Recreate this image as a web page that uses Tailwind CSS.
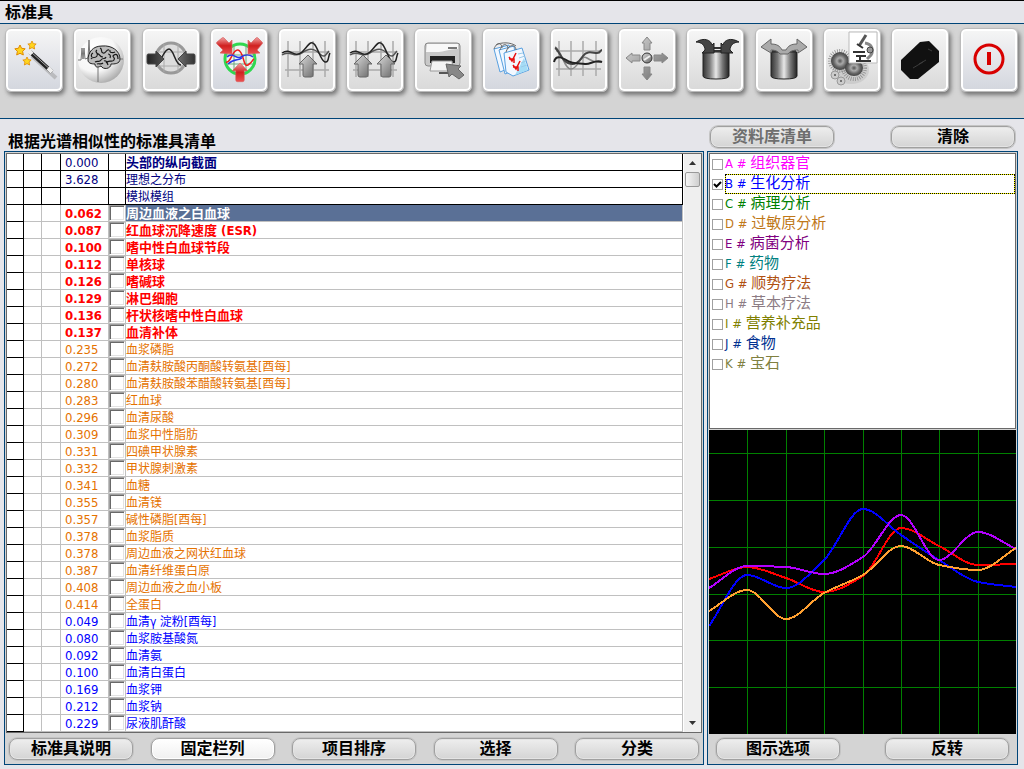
<!DOCTYPE html>
<html lang="zh-CN">
<head>
  <meta charset="UTF-8" />
  <meta name="viewport" content="width=device-width, initial-scale=1.0" />
  <title>标准具</title>
  <script src="https://cdn.jsdelivr.net/npm/@tailwindcss/browser@4"></script>
</head>
<body class="min-h-screen flex flex-col bg-[#e5e5ea] text-black font-['DejaVu_Sans_Condensed','Noto_Sans_CJK_SC',sans-serif]">

  <header class="border-t border-black">
    <h1 class="h-[22px] pl-[5px] text-[16px] leading-6 font-bold">标准具</h1>
  </header>

  <!-- Toolbar -->
  <nav class="flex justify-between items-start h-24 pt-1 pl-[5px] pr-[6px] bg-[#d4d4d4] border-y border-[#004578]">
    <svg class="absolute w-0 h-0">
      <defs>
        <linearGradient id="metal" x1="0" x2="1"><stop offset="0" stop-color="#333"/><stop offset=".25" stop-color="#777"/><stop offset=".5" stop-color="#e8e8e8"/><stop offset=".75" stop-color="#777"/><stop offset="1" stop-color="#222"/></linearGradient>
        <linearGradient id="grey" x1="0" x2="1" y2="1"><stop offset="0" stop-color="#ddd"/><stop offset="1" stop-color="#666"/></linearGradient>
        <linearGradient id="dark" x1="0" x2="1"><stop offset="0" stop-color="#222"/><stop offset=".6" stop-color="#777"/><stop offset="1" stop-color="#333"/></linearGradient>
        <linearGradient id="red" x1="0" x2="0" y2="1"><stop offset="0" stop-color="#f0a0a0"/><stop offset=".5" stop-color="#d02020"/><stop offset="1" stop-color="#ec5050"/></linearGradient>
        <radialGradient id="ball" cx=".35" cy=".3" r=".75"><stop offset="0" stop-color="#fff"/><stop offset=".6" stop-color="#f6f6f6"/><stop offset="1" stop-color="#aaa"/></radialGradient>
        <radialGradient id="cell"><stop offset="0" stop-color="#555"/><stop offset=".35" stop-color="#aaa"/><stop offset=".7" stop-color="#666"/><stop offset="1" stop-color="#444"/></radialGradient>
        <path id="up" d="M0 0l9 9h-4v11q0 2-2 2h-6q-2 0-2-2v-11h-4z"/>
        <path id="star" d="M0-5l1.600 3.300 3.600.500-2.600 2.500.700 3.700L0 3.300-3.300 5l.700-3.700-2.600-2.500 3.600-.500z"/>
      </defs>
    </svg>

    <div class="flex gap-[10px]">
      <button aria-label="向导" class="w-[58px] h-16 rounded-md bg-linear-to-b from-[#f6f6f6] to-[#d3d6de] border border-[#bbb] shadow-[inset_0_0_0_2px_#fff,2px_3px_4px_#777]">
        <svg viewBox="1 1 56 62" class="w-full h-full">
          <path d="M27 28L51 50" stroke="#999" stroke-width="4" opacity=".5"/>
          <path d="M25 24L47 44" stroke="#222" stroke-width="4"/>
          <path d="M26 24L47 43" stroke="#aaa" stroke-width="1"/>
          <path d="M24 23l3 3M43 40l4 4" stroke="#eee" stroke-width="4"/>
          <g fill="#ffd51e" stroke="#e08a00"><use href="#star" x="15" y="22"/><use href="#star" transform="translate(27 17) scale(.8)"/><use href="#star" transform="translate(22 33) scale(.8)"/></g>
        </svg>
      </button>
      <button aria-label="大脑" class="w-[58px] h-16 rounded-md bg-linear-to-b from-[#f6f6f6] to-[#d9d9d9] border border-[#bbb] shadow-[inset_0_0_0_2px_#fff,2px_3px_4px_#777]">
        <svg viewBox="1 1 56 62" class="w-full h-full" fill="none" stroke="#444">
          <circle cx="28" cy="32" r="23" fill="url(#ball)" stroke="none"/>
          <path d="M5 32h3l1-12 1 11 1-11 1 11 3-1 1-18 1 19h33M25 38v16" stroke="#777"/>
          <path d="M15 32c0-8 5-14 14-14 10-1 18 5 18 13 0 5-6 5-9 5 0 5-8 6-10 2-4 2-6 1-6-2-4 0-7-1-7-4z" fill="#bbb" stroke="#222"/>
          <path d="M18 31c2-3 4 0 6-3s-3-4 0-6M22 34c3-2 4 1 6-2s4 0 5-3M27 20c3 1 0 4 3 5s3-4 6-3M33 35c3-4 6 0 8-3s-3-3 0-5 4 1 4 4M30 29c-4 0-3-4-6-3M37 22c-1 3 3 3 5 2M35 26c2 0 3 2 2 4M20 25c-2 1-2 3-1 4M24 36c2-1 4 1 6-1M31 33c2-1 3 1 4 4" stroke="#181818" stroke-width="1.200"/>
        </svg>
      </button>
    </div>

    <div class="flex gap-[10px]">
      <button aria-label="比较" class="w-[58px] h-16 rounded-md bg-linear-to-b from-[#f6f6f6] to-[#d9d9d9] border border-[#bbb] shadow-[inset_0_0_0_2px_#fff,2px_3px_4px_#777]">
        <svg viewBox="1 1 56 62" class="w-full h-full" fill="none">
          <circle cx="29" cy="30" r="15" fill="#ddd" stroke="#999" stroke-width="3"/>
          <path d="M15 24h28M15 38h28M22 16v28M36 16v28" stroke="#aaa"/>
          <path d="M16 33c4 0 6-12 11-12s6 16 12 16" stroke="#222" stroke-width="1.500"/>
          <path d="M6 26h8v-3l8 8-8 8v-3H6q-1 0-1-2v-6q0-2 1-2zM52 26h-8v-3l-8 8 8 8v-3h8q1 0 1-2v-6q0-2-1-2z" fill="url(#dark)" stroke="#444"/>
        </svg>
      </button>
      <button aria-label="光谱" class="w-[58px] h-16 rounded-md bg-linear-to-b from-[#f6f6f6] to-[#d3d6de] border border-[#bbb] shadow-[inset_0_0_0_2px_#fff,2px_3px_4px_#777]">
        <svg viewBox="1 1 56 62" class="w-full h-full" fill="none">
          <circle cx="30" cy="31" r="15" fill="#eef4f0" stroke="#30d850" stroke-width="3"/>
          <path d="M16 27h28M17 36h26M24 18v26M36 18v26" stroke="#6fa87c"/>
          <path d="M16 34c5 2 6-13 12-12s5 18 10 15 4-5 6-6" stroke="#f01c1c" stroke-width="1.500"/>
          <path d="M17 29c6-6 9 3 14 0s8-3 12 0M18 36c6-6 10-3 14-6" stroke="#2836e8" stroke-width="1.500"/>
          <g fill="url(#red)" stroke="#d86060" stroke-width=".700"><use href="#up" transform="translate(30 35) scale(.850)"/><path d="M22 26l-12-1 3-3-6-6q-1-1 0-2l5-4q1-1 2 0l5 5 3-3zM38 26l12-1-3-3 5-6q1-1 0-2l-4-4q-1-1-2 0l-5 5-3-3z"/></g>
        </svg>
      </button>
      <button aria-label="上移曲线" class="w-[58px] h-16 rounded-md bg-linear-to-b from-[#f6f6f6] to-[#d9d9d9] border border-[#bbb] shadow-[inset_0_0_0_2px_#fff,2px_3px_4px_#777]">
        <svg viewBox="1 1 56 62" class="w-full h-full" fill="none">
          <path d="M10 13v36M22 13v36M35 13v36M47 13v36M7 24h44M7 42h44" stroke="#aaa" stroke-width="1.500"/>
          <path d="M4 27c8-6 12 4 20-2s13-4 18 1 6 0 9-3" stroke="#555" stroke-width="1.500"/>
          <path d="M4 25c9-6 12 6 20-1 6-6 9-13 13-7s6 16 10 17 3-6 5-9" stroke="#222" stroke-width="1.500"/>
          <use href="#up" x="30" y="27" fill="url(#grey)" stroke="#666"/>
        </svg>
      </button>
      <button aria-label="上移两条曲线" class="w-[58px] h-16 rounded-md bg-linear-to-b from-[#f6f6f6] to-[#d9d9d9] border border-[#bbb] shadow-[inset_0_0_0_2px_#fff,2px_3px_4px_#777]">
        <svg viewBox="1 1 56 62" class="w-full h-full" fill="none">
          <path d="M10 13v36M22 13v36M35 13v36M47 13v36M7 24h44M7 42h44" stroke="#aaa" stroke-width="1.500"/>
          <path d="M4 27c8-6 12 4 20-2s13-4 18 1 6 0 9-3" stroke="#555" stroke-width="1.500"/>
          <path d="M4 25c9-6 12 6 20-1 6-6 9-13 13-7s6 16 10 17 3-6 5-9" stroke="#222" stroke-width="1.500"/>
          <g fill="url(#grey)" stroke="#666"><use href="#up" x="17" y="27"/><use href="#up" x="40" y="27"/></g>
        </svg>
      </button>
      <button aria-label="打印" class="w-[58px] h-16 rounded-md bg-linear-to-b from-[#f6f6f6] to-[#d9d9d9] border border-[#bbb] shadow-[inset_0_0_0_2px_#fff,2px_3px_4px_#777]">
        <svg viewBox="1 1 56 62" class="w-full h-full">
          <rect x="11" y="15" width="35" height="23" rx="3" fill="#c8c8c8" stroke="#888"/>
          <path d="M13 16h31v5c-9 0-15 3-19 3H12z" fill="#f8f8f8"/>
          <path d="M34 20h9" stroke="#777" stroke-width="2"/>
          <path d="M16 28h25v7H16z" fill="#222"/>
          <path d="M18 33h20l1 10H16z" fill="#f4f4f4" stroke="#999"/>
          <path d="M25 45h14" stroke="#555" stroke-width="2"/>
          <path d="M32 36l15 2-3 3 6 6-5 4-7-5-3 3z" fill="#888" stroke="#666"/>
        </svg>
      </button>
      <button aria-label="清单" class="w-[58px] h-16 rounded-md bg-linear-to-b from-[#f6f6f6] to-[#d3d6de] border border-[#bbb] shadow-[inset_0_0_0_2px_#fff,2px_3px_4px_#777]">
        <svg viewBox="1 1 56 62" class="w-full h-full" fill="none">
          <g fill="#f2f8ff" stroke="#58a0e0"><path d="M12 21l15-4 3 22-12 5z"/><path d="M17 22l15-4 3 23-12 5z"/><path d="M22 25l18-5 7 22-16 6-7-4z"/></g>
          <path d="M42 30l4 12-13 5z" fill="#a4dcf6"/>
          <path d="M36 26l5-1M37 30l6-2M39 35l5-2M39 39l6-2" stroke="#9ccbe8"/>
          <path d="M12 21c3-8 8-6 8-1M18 22c3-8 8-6 8-1M24 24c3-9 10-7 10-2M14 17c5-3 15-3 20 1" stroke="#666"/>
          <path d="M27 29l3 4 4-8M31 37l3 4 4-8M27 31h5v4M31 39h5v4" stroke="#e81010" stroke-width="1.500"/>
        </svg>
      </button>
      <button aria-label="曲线图" class="w-[58px] h-16 rounded-md bg-linear-to-b from-[#f6f6f6] to-[#d9d9d9] border border-[#bbb] shadow-[inset_0_0_0_2px_#fff,2px_3px_4px_#777]">
        <svg viewBox="1 1 56 62" class="w-full h-full" fill="none">
          <path d="M9 13v35M21 13v35M33 13v35M46 13v35M6 23h45M6 41h45" stroke="#aaa" stroke-width="1.500"/>
          <path d="M5 19c6 2 9 22 16 22s9-15 16-11 9 5 15 4" stroke="#888" stroke-width="1.500"/>
          <path d="M5 20c4 2 6 12 13 15s11-1 15-7 10-3 14-3 3-3 5-3" stroke="#444" stroke-width="2"/>
          <path d="M4 34c2-8 9-4 14-1s12 2 17 3 10-5 17-2" stroke="#222" stroke-width="2"/>
        </svg>
      </button>
      <button aria-label="移动" class="w-[58px] h-16 rounded-md bg-linear-to-b from-[#f6f6f6] to-[#d9d9d9] border border-[#bbb] shadow-[inset_0_0_0_2px_#fff,2px_3px_4px_#777]">
        <svg viewBox="1 1 56 62" class="w-full h-full" fill="url(#grey)" stroke="#888">
          <path d="M29 9l5 6h-2v7h-6v-7h-2zM29 52l5-6h-2v-7h-6v7h-2zM8 30l6-5v2h8v6h-8v2zM50 30l-6-5v2h-8v6h8v2z"/>
          <circle cx="29" cy="30" r="5" stroke="#333"/>
          <path d="M26 32l6-4" stroke="#eee" stroke-width="2"/>
        </svg>
      </button>
      <button aria-label="放入" class="w-[58px] h-16 rounded-md bg-linear-to-b from-[#f6f6f6] to-[#d9d9d9] border border-[#bbb] shadow-[inset_0_0_0_2px_#fff,2px_3px_4px_#777]">
        <svg viewBox="1 1 56 62" class="w-full h-full">
          <path d="M17 24v24q0 3 13 3t13-3V24z" fill="url(#metal)" stroke="#222"/>
          <path d="M18 23h24M26 20h9" stroke="#333" stroke-width="2"/>
          <path d="M10 14c8-5 15-2 16 3l2-2v10H16l3-3c0-4-3-8-9-8zM53 14c-8-5-15-2-16 3l-2-2v10h12l-3-3c0-4 3-8 9-8z" fill="#444" stroke="#222"/>
        </svg>
      </button>
    </div>

    <div class="flex gap-[10px]">
      <button aria-label="取出" class="w-[58px] h-16 rounded-md bg-linear-to-b from-[#f6f6f6] to-[#d9d9d9] border border-[#bbb] shadow-[inset_0_0_0_2px_#fff,2px_3px_4px_#777]">
        <svg viewBox="1 1 56 62" class="w-full h-full">
          <path d="M16 24v24q0 3 13 3t13-3V24z" fill="url(#metal)" stroke="#222"/>
          <path d="M17 23h24" stroke="#333" stroke-width="2"/>
          <path d="M6 19l10-8v5c6 0 9 2 11 6h4c2-4 5-6 11-6v-5l10 8-9 6v-3c-5 0-8 1-10 4h-8c-2-3-5-4-9-4v3z" fill="#aaa" stroke="#666"/>
        </svg>
      </button>
      <button aria-label="显微镜" class="w-[58px] h-16 rounded-md bg-linear-to-b from-[#f6f6f6] to-[#d9d9d9] border border-[#bbb] shadow-[inset_0_0_0_2px_#fff,2px_3px_4px_#777]">
        <svg viewBox="1 1 56 62" class="w-full h-full" fill="none">
          <ellipse cx="28" cy="42" rx="18" ry="14" fill="#bbb" opacity=".5"/>
          <circle cx="17" cy="33" r="10" stroke="#888" stroke-width="4" stroke-dasharray=".7 1.500"/>
          <circle cx="31" cy="40" r="11" stroke="#888" stroke-width="4" stroke-dasharray=".7 1.500"/>
          <circle cx="17" cy="33" r="9" fill="url(#cell)"/><ellipse cx="31" cy="40" rx="9" ry="8" fill="url(#cell)"/>
          <g fill="#ccc" stroke="#999"><circle cx="12" cy="47" r="4"/><circle cx="18" cy="53" r="4"/></g>
          <g fill="#555"><circle cx="12" cy="47" r="1"/><circle cx="18" cy="53" r="1"/></g>
          <path d="M26 4h28v31H26z" fill="#fff" stroke="#bbb"/>
          <path d="M43 7l-7 11" stroke="#555" stroke-width="3"/><path d="M34 16l6 4" stroke="#333" stroke-width="2"/>
          <path d="M42 15c7 1 9 7 6 12l-4 4" stroke="#888" stroke-width="3"/>
          <circle cx="47" cy="22" r="3" fill="#999" stroke="#444"/>
          <path d="M30 24h12M33 28h10M33 33h15M37 28v5" stroke="#333" stroke-width="2"/>
        </svg>
      </button>
      <button aria-label="宝石" class="w-[58px] h-16 rounded-md bg-linear-to-b from-[#f6f6f6] to-[#d9d9d9] border border-[#bbb] shadow-[inset_0_0_0_2px_#fff,2px_3px_4px_#777]">
        <svg viewBox="1 1 56 62" class="w-full h-full">
          <path d="M29 14l9-1 10 10v11L27 51h-8l-9-9V32z" fill="#111"/>
          <path d="M22 40l10-6M28 36l7-4M37 21l4 2" stroke="#3c3c3c"/>
        </svg>
      </button>
    </div>

    <button aria-label="退出" class="w-[58px] h-16 rounded-md bg-linear-to-b from-[#f6f6f6] to-[#d3d6de] border border-[#bbb] shadow-[inset_0_0_0_2px_#fff,2px_3px_4px_#777]">
      <svg viewBox="1 1 56 62" class="w-full h-full">
        <circle cx="29" cy="31" r="14" fill="none" stroke="#d80000" stroke-width="3"/>
        <path d="M29 24v13" stroke="#d80000" stroke-width="4"/>
      </svg>
    </button>
  </nav>

  <main class="flex-1 flex gap-[3px] pl-1 pr-[6px] pb-1">

    <!-- Etalon list -->
    <section class="flex-1 min-w-0 flex flex-col">
      <h2 class="h-8 pt-3 pl-1 text-[16px] leading-[22px] font-bold">根据光谱相似性的标准具清单</h2>
      <div class="flex-1 flex flex-col border border-[#004578] bg-[#d4d4d4] pt-px px-px">
        <div class="flex border border-[#696969] bg-white">
          <table class="flex-1 table-fixed border-separate border-spacing-0 w-full">
            <colgroup>
              <col class="w-[17px]" /><col class="w-[18px]" /><col class="w-[19px]" /><col class="w-12" /><col class="w-[17px]" /><col />
            </colgroup>
            <tbody id="rows"></tbody>
          </table>
          <div class="w-[17px] ml-px flex flex-col bg-[#efefef]">
            <button aria-label="向上" class="h-[18px] flex items-center justify-center"><svg viewBox="0 0 7 4" class="w-[7px] h-1"><path d="M0 4l3.500-4L7 4z" fill="#333"/></svg></button>
            <div class="h-[15px] mx-px rounded-xs border border-[#999] bg-linear-to-r from-[#f6f6f6] to-[#cfcfcf]"></div>
            <button aria-label="向下" class="h-[18px] mt-auto flex items-center justify-center"><svg viewBox="0 0 7 4" class="w-[7px] h-1"><path d="M0 0l3.500 4L7 0z" fill="#333"/></svg></button>
          </div>
        </div>
        <div class="flex-1 flex items-center justify-between px-[3px] h-[31px] text-[16px] font-bold">
          <button class="w-[124px] h-[22px] leading-5 rounded-lg border border-[#a0a0a0] shadow-[inset_0_0_0_1px_#e4e4e4,0_0_0_1px_#c4c4c4] bg-linear-to-b from-[#eee] to-[#d4d4d4]">标准具说明</button>
          <button class="w-[124px] h-[22px] leading-5 rounded-lg border border-[#a0a0a0] shadow-[inset_0_0_0_1px_#fff,0_0_0_1px_#c4c4c4] bg-linear-to-b from-white to-[#f0f0f0]">固定栏列</button>
          <button class="w-[124px] h-[22px] leading-5 rounded-lg border border-[#a0a0a0] shadow-[inset_0_0_0_1px_#e4e4e4,0_0_0_1px_#c4c4c4] bg-linear-to-b from-[#eee] to-[#d4d4d4]">项目排序</button>
          <button class="w-[124px] h-[22px] leading-5 rounded-lg border border-[#a0a0a0] shadow-[inset_0_0_0_1px_#e4e4e4,0_0_0_1px_#c4c4c4] bg-linear-to-b from-[#eee] to-[#d4d4d4]">选择</button>
          <button class="w-[124px] h-[22px] leading-5 rounded-lg border border-[#a0a0a0] shadow-[inset_0_0_0_1px_#e4e4e4,0_0_0_1px_#c4c4c4] bg-linear-to-b from-[#eee] to-[#d4d4d4]">分类</button>
        </div>
      </div>
    </section>

    <!-- Databases and graph -->
    <section class="w-[311px] flex flex-col">
      <div class="h-8 pt-[7px] px-[3px] flex items-start justify-between text-[16px] font-bold">
        <button disabled class="w-[124px] h-[22px] leading-5 rounded-lg border border-[#a0a0a0] shadow-[inset_0_0_0_1px_#e4e4e4,0_0_0_1px_#c4c4c4] bg-linear-to-b from-[#eee] to-[#d4d4d4] text-[#6e6e6e]">资料库清单</button>
        <button class="w-[124px] h-[22px] leading-5 rounded-lg border border-[#a0a0a0] shadow-[inset_0_0_0_1px_#e4e4e4,0_0_0_1px_#c4c4c4] bg-linear-to-b from-[#eee] to-[#d4d4d4]">清除</button>
      </div>
      <div class="flex-1 flex flex-col border border-[#004578] bg-[#d4d4d4] pt-px px-px">
        <ul id="databases" class="h-[276px] border border-[#696969] bg-white"></ul>
        <svg id="graph" viewBox="0 0 307 304" preserveAspectRatio="none" class="mt-px w-full h-[304px] bg-black" fill="none" shape-rendering="crispEdges">
          <path d="M38.500 0v304M77.500 0v304M115.500 0v304M154.500 0v304M192.500 0v304M230.500 0v304M269.500 0v304M0 23.500h307M0 70.500h307M0 117.500h307M0 164.500h307M0 210.500h307M0 257.500h307" stroke="#008000"/>
        </svg>
        <div class="flex-1 flex items-center justify-between px-[7px] h-[31px] text-[16px] font-bold">
          <button class="w-[124px] h-[22px] leading-5 rounded-lg border border-[#a0a0a0] shadow-[inset_0_0_0_1px_#e4e4e4,0_0_0_1px_#c4c4c4] bg-linear-to-b from-[#eee] to-[#d4d4d4]">图示选项</button>
          <button class="w-[124px] h-[22px] leading-5 rounded-lg border border-[#a0a0a0] shadow-[inset_0_0_0_1px_#e4e4e4,0_0_0_1px_#c4c4c4] bg-linear-to-b from-[#eee] to-[#d4d4d4]">反转</button>
        </div>
      </div>
    </section>
  </main>

  <script>
    const styles = {
      head: "text-[#000080] text-[12px]",
      headBold: "text-[#000080] text-[13px] font-bold",
      red: "text-[#ff0000] text-[13px] font-bold",
      orange: "text-[#e57200] text-[12px]",
      blue: "text-[#0000ff] text-[12px]",
    };

    const items = [
      ["0.000", "头部的纵向截面", "headBold"],
      ["3.628", "理想之分布", "head"],
      ["", "模拟模组", "head"],
      ["0.062", "周边血液之白血球", "red"],
      ["0.087", "红血球沉降速度 (ESR)", "red"],
      ["0.100", "嗜中性白血球节段", "red"],
      ["0.112", "单核球", "red"],
      ["0.126", "嗜碱球", "red"],
      ["0.129", "淋巴细胞", "red"],
      ["0.136", "杆状核嗜中性白血球", "red"],
      ["0.137", "血清补体", "red"],
      ["0.235", "血浆磷脂", "orange"],
      ["0.272", "血清麸胺酸丙酮酸转氨基[酉每]", "orange"],
      ["0.280", "血清麸胺酸苯醋酸转氨基[酉每]", "orange"],
      ["0.283", "红血球", "orange"],
      ["0.296", "血清尿酸", "orange"],
      ["0.309", "血浆中性脂肪", "orange"],
      ["0.331", "四碘甲状腺素", "orange"],
      ["0.332", "甲状腺刺激素", "orange"],
      ["0.341", "血糖", "orange"],
      ["0.355", "血清镁", "orange"],
      ["0.357", "碱性磷脂[酉每]", "orange"],
      ["0.378", "血浆脂质", "orange"],
      ["0.378", "周边血液之网状红血球", "orange"],
      ["0.387", "血清纤维蛋白原", "orange"],
      ["0.408", "周边血液之血小板", "orange"],
      ["0.414", "全蛋白", "orange"],
      ["0.049", "血清γ 淀粉[酉每]", "blue"],
      ["0.080", "血浆胺基酸氮", "blue"],
      ["0.092", "血清氨", "blue"],
      ["0.100", "血清白蛋白", "blue"],
      ["0.169", "血浆钾", "blue"],
      ["0.212", "血浆钠", "blue"],
      ["0.229", "尿液肌酐酸", "blue"],
    ];
    const selected = 3;

    document.getElementById("rows").innerHTML = items.map(([value, name, kind], i) => {
      const fixed = i < 3;
      const line = fixed ? "border-black" : "border-[#c0c0c0]";
      const weight = kind === "red" ? "font-bold" : "font-normal";
      const nameStyle = i === selected ? "bg-[#5a7096] text-white text-[13px] font-bold" : styles[kind];
      const tick = fixed ? "" : `<input type="checkbox" aria-label="${name}" class="block appearance-none w-4 h-4 bg-white border border-t-[#a0a0a0] border-l-[#a0a0a0] border-r-white border-b-white shadow-[inset_1px_1px_0_#696969,inset_-1px_-1px_0_#e3e3e3]" />`;
      return `<tr class="h-[17px]">
        <td class="p-0 border-r border-b border-black"></td>
        <td class="p-0 border-r border-b ${line}"></td>
        <td class="p-0 border-r border-b ${line}"></td>
        <td class="p-0 pl-1 border-r border-b ${line} ${styles[kind]}"><div class="h-4 leading-[18px] text-[13px] ${weight}">${value}</div></td>
        <td class="p-0 border-r border-b ${line}">${tick}</td>
        <td class="p-0 border-r border-b ${line} ${nameStyle}"><div class="h-4 leading-[18px] whitespace-nowrap">${name}</div></td>
      </tr>`;
    }).join("");

    const databases = [
      ["A", "组织器官", "text-[#ff00ff]"],
      ["B", "生化分析", "text-[#0000ff]"],
      ["C", "病理分析", "text-[#008000]"],
      ["D", "过敏原分析", "text-[#c07818]"],
      ["E", "病菌分析", "text-[#800080]"],
      ["F", "药物", "text-[#008080]"],
      ["G", "顺势疗法", "text-[#b05010]"],
      ["H", "草本疗法", "text-[#8c7c84]"],
      ["I", "营养补充品", "text-[#808000]"],
      ["J", "食物", "text-[#003090]"],
      ["K", "宝石", "text-[#808040]"],
    ];

    document.getElementById("databases").innerHTML = databases.map(([key, name, color]) => {
      const on = key === "B";
      const focus = on ? "outline-1 -outline-offset-1 outline-dotted outline-black shadow-[inset_0_0_0_1px_#ffff00]" : "";
      return `<li class="h-5 flex items-center pl-[2px]">
        <span class="relative w-[11px] h-[11px] mr-[2px]">
          <input id="db-${key}" type="checkbox" ${on ? "checked" : ""} class="peer block appearance-none w-[11px] h-[11px] bg-white border border-[#a0a0a0]" />
          <svg viewBox="0 0 11 11" class="absolute inset-0 hidden peer-checked:block pointer-events-none"><path d="M2 5l2.500 2.500L9 3" fill="none" stroke="#000" stroke-width="2"/></svg>
        </span>
        <label for="db-${key}" class="flex-1 h-5 leading-[18px] text-[13px] whitespace-pre ${focus} ${color}">${key} # <span class="text-[15px]">${name}</span></label>
      </li>`;
    }).join("");

    // Spectrum curves, one node per grid line
    const xs = [0, 38, 77, 115, 154, 192, 230, 269, 307];
    const curves = [
      ["#ff0000", [149, 137, 148, 162, 146, 98, 116, 135, 134]],
      ["#0000ff", [196, 145, 158, 130, 79, 105, 130, 152, 157]],
      ["#b400ff", [158, 136, 137, 144, 127, 85, 130, 102, 119]],
      ["#ffa030", [181, 160, 189, 163, 145, 116, 135, 140, 118]],
    ];

    function curvePath(ys) {
      const slope = ys.slice(1).map((y, i) => (y - ys[i]) / (xs[i + 1] - xs[i]));
      const tangent = ys.map((y, i) => {
        if (i === 0) return slope[0];
        if (i === ys.length - 1) return slope[i - 1];
        const a = slope[i - 1], b = slope[i];
        return a * b <= 0 ? 0 : (2 * a * b) / (a + b);
      });
      let d = `M${xs[0]} ${ys[0]}`;
      for (let i = 1; i < ys.length; i++) {
        const h = (xs[i] - xs[i - 1]) / 3;
        d += `C${xs[i - 1] + h} ${ys[i - 1] + h * tangent[i - 1]} ${xs[i] - h} ${ys[i] - h * tangent[i]} ${xs[i]} ${ys[i]}`;
      }
      return d;
    }

    const graph = document.getElementById("graph");
    curves.forEach(([color, ys]) => {
      const path = document.createElementNS("http://www.w3.org/2000/svg", "path");
      path.setAttribute("d", curvePath(ys));
      path.setAttribute("stroke", color);
      path.setAttribute("stroke-width", "2");
      graph.appendChild(path);
    });
  </script>
</body>
</html>
